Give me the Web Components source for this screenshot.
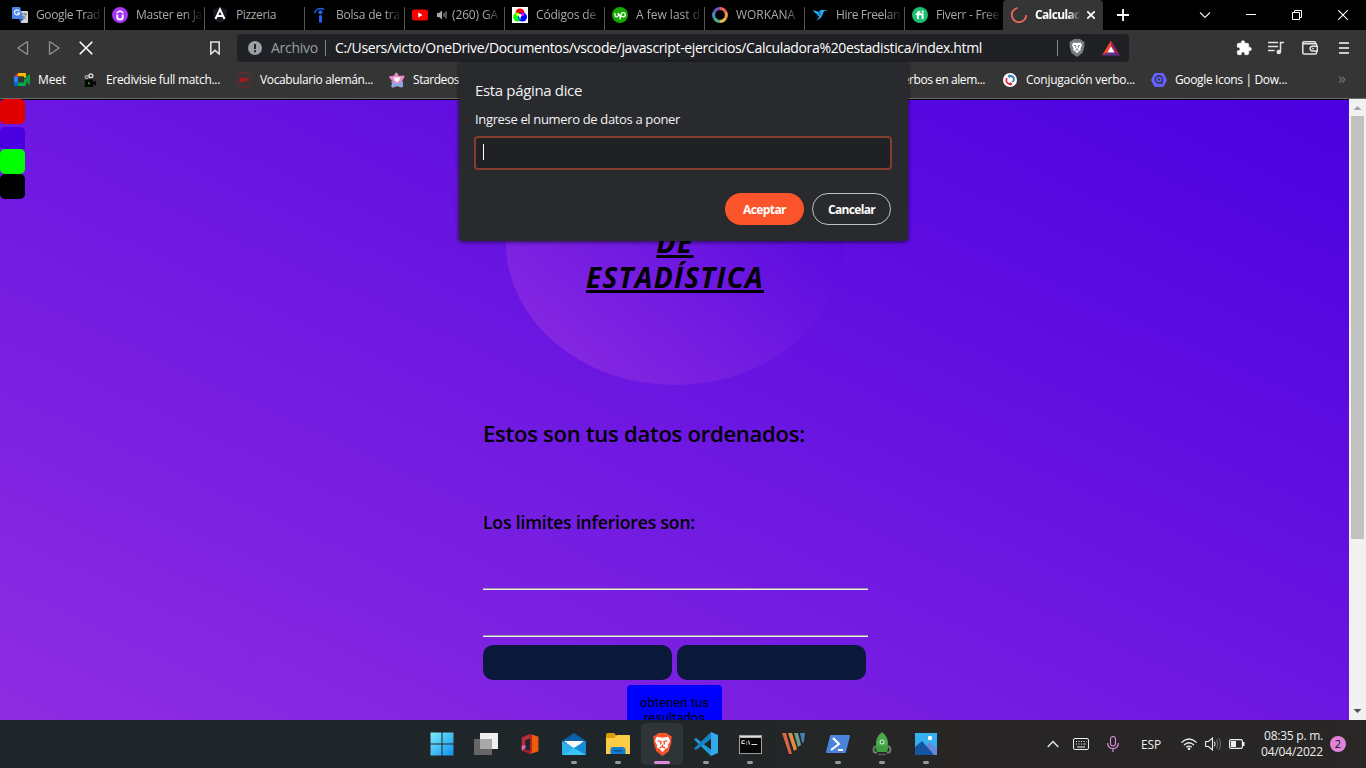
<!DOCTYPE html>
<html lang="es"><head><meta charset="utf-8"><title>Calculadora</title>
<style>html,body{margin:0;width:1366px;height:768px;overflow:hidden;background:#000;font-family:"Open Sans","Noto Sans",sans-serif}</style></head>
<body><desktop-screen></desktop-screen>
<script>
const svg=(vb,b)=>`<svg viewBox="${vb}" fill="none">${b}</svg>`;
const ICONS={
translate:svg('0 0 16 16','<path d="M6 4h9q1 0 1 1v10q0 1-1 1H9z" fill="#d5d5d5"/><path d="M1 0h7l3.500 12H1q-1 0-1-1V1q0-1 1-1z" fill="#4a83ec"/><path d="M8 16l3.500-4H7.500z" fill="#3059b8"/><path d="M7.300 4.300A2.500 2.500 0 1 0 7.500 6H5" stroke="#fff" stroke-width="1.100"/><path d="M10 7h5M12.500 6v1M14 7q-.5 3-3 5M11 8.500q1 2.500 3 3.500" stroke="#666" stroke-width=".8"/>'),
udemy:svg('0 0 16 16','<circle cx="8" cy="8" r="8" fill="#a435f0"/><path d="M5.300 7.500v2.700q0 2.300 2.700 2.300t2.700-2.300V7.500" stroke="#fff" stroke-width="1.800"/><path d="M4.600 5.800L8 3.900l3.400 1.900" stroke="#fff" stroke-width="1.500"/>'),
angular:svg('0 0 16 16','<path d="M8 0l7 2.500-1 9.500-6 4-6-4-1-9.500z" fill="#171b21"/><path d="M3.500 12L8 2.300 12.500 12M5.500 9h5" stroke="#fff" stroke-width="1.900"/>'),
indeed:svg('0 0 16 16','<path d="M2.500 6Q5-.5 12 2.300" stroke="#2164f3" stroke-width="1.500"/><circle cx="8.500" cy="5.300" r="2" fill="#2164f3"/><path d="M8.500 8.300V15.500" stroke="#2164f3" stroke-width="3"/>'),
youtube:svg('0 0 16 16','<rect y="2.500" width="16" height="11" rx="2.500" fill="#f00"/><path d="M6.300 5.500v5l4.300-2.500z" fill="#fff"/>'),
sound:svg('0 0 12 12','<path d="M1 4h2l3-2.500v9L3 8H1z" fill="#aaa"/><path d="M8 4v4M10 2.500v7" stroke="#aaa"/>'),
colors:svg('0 0 16 16','<path fill="#fff" d="M0 0h16v16H0z"/><circle cx="8" cy="6" r="4.500" fill="red"/><circle cx="5.700" cy="10" r="4.500" fill="#0f0"/><circle cx="10.500" cy="10" r="4.500" fill="#00f"/><path d="M3.500 6.500Q5 5 8 8l-3 1z" fill="#ff0"/><path d="M12.500 6.500Q10 5 8 8l4 1z" fill="#f0f"/><path d="M8 8.500q2 2 0 5-2-3 0-5z" fill="#0df"/><circle cx="8" cy="8.500" r="1.700" fill="#fff"/>'),
upwork:svg('0 0 16 16','<circle cx="8" cy="8" r="8" fill="#14a800"/><path d="M3 6v2.200q0 1.700 1.600 1.700t1.700-1.700V6q.8 3 2.700 3.800M7.800 12.500L9 7.500q.6-1.800 2.200-1.800a2 2 0 0 1 0 4.100Q9.500 9.800 8 7.500" stroke="#fff" stroke-width="1.300"/>'),
workana:svg('0 0 16 16','<g stroke-width="3"><path d="M8 1.600A6.400 6.400 0 0 1 13.500 4.800" stroke="#eb5f57"/><path d="M13.500 4.800A6.400 6.400 0 0 1 13.500 11.200" stroke="#f09745"/><path d="M13.500 11.200A6.400 6.400 0 0 1 8 14.400" stroke="#dabd51"/><path d="M8 14.400A6.400 6.400 0 0 1 2.500 11.200" stroke="#54a885"/><path d="M2.500 11.200A6.400 6.400 0 0 1 2.500 4.800" stroke="#468bc2"/><path d="M2.500 4.800A6.400 6.400 0 0 1 8 1.600" stroke="#7650b5"/></g>'),
freelancer:svg('0 0 16 16','<path d="M1 3l6 2 1.500-2H16l-4 1-2.500 6L4.500 14 7.500 9 4 8l2-.6L2.500 5.600z" fill="#29b2fe"/><path d="M8.500 3l1 7L6 6z" fill="#0e7fc0"/>'),
fiverr:svg('0 0 16 16','<circle cx="8" cy="8" r="8" fill="#1dbf73"/><path d="M3.800 7.300h6.800V12M5.900 12V6.200Q5.900 4.500 8.300 4.600" stroke="#fff" stroke-width="1.900"/><circle cx="10.700" cy="4.700" r="1.100" fill="#fff"/>'),
spinner:svg('0 0 16 16','<path d="M6.500.9A7.200 7.200 0 1 0 15.200 8" stroke="#e8695b" stroke-width="1.800"/>'),
closeb:svg('0 0 10 10','<path d="M1.300 1.300l7.400 7.400M8.700 1.300L1.300 8.700" stroke="#fff" stroke-width="1.700"/>'),
plus:svg('0 0 12 12','<path d="M6 0v12M0 6h12" stroke="#fff" stroke-width="1.800"/>'),
chev:svg('0 0 12 12','<path d="M1 3.500l5 5 5-5" stroke="#eee" stroke-width="1.100"/>'),
min:svg('0 0 10 10','<path d="M0 4.500h10" stroke="#fff"/>'),
restore:svg('0 0 10 10','<path d="M.5 2.500h7v7h-7zM2.500 2.500v-2h7v7h-2" stroke="#fff"/>'),
close:svg('0 0 10 10','<path d="M.3.3l9.400 9.400M9.700.3L.3 9.700" stroke="#fff" stroke-width="1.100"/>'),
back:svg('0 0 14 14','<path d="M11.500 1v12Q11 13.500 10.500 13L2 7l8.500-6q.6-.4 1 0z" stroke="#929292" stroke-width="1.300"/>'),
fwd:svg('0 0 14 14','<path d="M2.500 1v12q.5.500 1 0L12 7 3.500 1q-.6-.4-1 0z" stroke="#929292" stroke-width="1.300"/>'),
stop:svg('0 0 14 14','<path d="M.7.700l12.600 12.600M13.300.700L.700 13.300" stroke="#fff" stroke-width="1.600"/>'),
mark:svg('0 0 12 14','<path d="M1.800 1h8.400v12L6 9.300 1.800 13z" stroke="#ddd" stroke-width="1.600"/>'),
info:svg('0 0 14 14','<circle cx="7" cy="7" r="7" fill="#9aa0a6"/><path d="M7 3v5M7 9.300v2" stroke="#202124" stroke-width="1.900"/>'),
lion:svg('0 0 16 18','<path d="M3 1.500L5 0h6l2 1.500L15.500 3l-.3 2 .3 2-2 7L8 18l-5.500-4-2-7L.8 5 .5 3z" fill="#777c80"/><path d="M4.500 3.500l3.500.6 3.500-.6L13 6l-1.600 3.700.4 1.300-2.200 1.400L8 14.200l-1.600-1.800L4.200 11l.4-1.300L3 6z" fill="#fff"/><path d="M4.800 6.300l2.200.5-.5 2M11.200 6.300L9 6.800l.5 2M6.300 11.300L8 10.600l1.700.7M8 9v2" stroke="#777c80" stroke-width=".9"/>'),
bat:svg('0 0 18 16','<path d="M9 .5L0 15.500l5.500-3L9 6.500z" fill="#ff4724"/><path d="M9 .5l9 15-5.500-3L9 6.500z" fill="#9e1f63"/><path d="M0 15.500h18l-5.500-3h-7z" fill="#662d91"/><path d="M9 6.300l3.700 6.200H5.300z" fill="#fff"/>'),
puzzle:svg('0 0 24 24','<path d="M20.500 11H19V7a2 2 0 0 0-2-2h-4V3.500a2.500 2.500 0 0 0-5 0V5H4a2 2 0 0 0-2 2v3.800h1.500a2.700 2.700 0 0 1 0 5.400H2V20a2 2 0 0 0 2 2h3.800v-1.500a2.700 2.700 0 0 1 5.400 0V22H17a2 2 0 0 0 2-2v-4h1.500a2.500 2.500 0 0 0 0-5z" fill="#fff" stroke="#fff"/>'),
music:svg('0 0 16 14','<path d="M0 1.500h10M0 5.500h10M0 9.500h6.500M12.500 11V1.500H16" stroke="#e4e4e4" stroke-width="1.500"/><circle cx="10.800" cy="11" r="2.300" fill="#e4e4e4"/>'),
wallet:svg('0 0 16 14','<path d="M14.500 5V3.500Q14.500 2.800 13.500 2.800H2Q.8 2.500.8 1.500M14.500 10v2q0 1-1 1H2q-1.200 0-1.200-1V2Q.8.800 2 .8h10.500q1 0 1 1v1" stroke="#e4e4e4" stroke-width="1.500"/><path d="M15.300 5.200H10.500a2.400 2.400 0 0 0 0 4.800h4.800z" stroke="#e4e4e4" stroke-width="1.400"/><circle cx="11" cy="7.600" r=".9" fill="#e4e4e4"/>'),
menu:svg('0 0 10 12','<path d="M0 1h10M0 6h10M0 11h10" stroke="#fff" stroke-width="1.700"/>'),
meet:svg('0 0 16 13','<path d="M4 0h7q1 0 1 1v3l-2 1V3.300H4z" fill="#ffba00"/><path d="M4 0v3.500H0z" fill="#ea4335"/><path d="M0 3.500h4v6H0z" fill="#2684fc"/><path d="M0 9.500h4V13H1q-1 0-1-1z" fill="#0066da"/><path d="M4 9.600h6V7l2-1v6q0 1-1 1H4z" fill="#00ac47"/><path d="M12 4l3-2.600q1-.5 1 .5v9q0 1-1 .5L10 7z" fill="#0a9843"/>'),
camera:svg('0 0 16 16','<path d="M3 8h9v3l3-2v6l-3-2v3H3z" fill="#060606"/><circle cx="5" cy="5.500" r="1.600" stroke="#aaa" stroke-width="1.300"/><circle cx="9.500" cy="4" r="2" stroke="#ddd" stroke-width="1.500"/><path d="M6.500 10.500v3l2.300-1.500z" fill="#35b229"/>'),
ja:svg('0 0 16 16','<circle cx="8" cy="8" r="7.400" stroke="#872326" stroke-width=".9"/><path d="M4 6h1.500v3.500H3.500M7 10V6.500h2V10M7 8h2M11.500 6v2.500M11.500 9.300v.8" stroke="#e80b11"/>'),
star:svg('0 0 16 16','<path d="M6 1.500q1-2 2.500 0L10 4l4-.5q2.500.3 1 2.500l-2 3 1 4q0 2-2 1.500L8 14l-4 1.500q-2 0-1.300-2L3.500 9 .5 6q-1-2 1.500-2l3-.3z" fill="#e98ac6"/><path d="M1.500 9l3 1L8 12l3.500-2 3-1-1 2 .8 2.500q0 2-2.300 2L8 14l-4 1.500q-2 0-1.500-2L3 11z" fill="#8aa7df"/><path d="M4.500 5.500q2-1.500 3.500 0 1.500-1.500 3.500 0 .5 2.500-3.500 5-4-2.500-3.500-5z" fill="#f7d9ee"/><path d="M6 6.500q1-1 2 0 1-1 2 0 0 1.500-2 3-2-1.500-2-3z" fill="#fff"/>'),
conj:svg('0 0 14 14','<circle cx="7" cy="7" r="7" fill="#fff"/><path d="M6 3h2q3 .5 3 4l-1.500 2" stroke="#3781b5" stroke-width="1.800"/><path d="M4 5Q1.800 9 6 11h3" stroke="#dd3346" stroke-width="1.800"/><path d="M7 1v4.500L4.500 3.200z" fill="#3781b5"/><path d="M7 8.500V13l2.500-2z" fill="#dd3346"/>'),
hex:svg('0 0 16 16','<path d="M4.500 1h7q1 0 1.500 1l3 6-3 6q-.5 1-1.500 1h-7q-1 0-1.500-1L0 8l3-6q.5-1 1.500-1z" fill="#6563ff"/><circle cx="8" cy="7.500" r="3.600" stroke="#353555" stroke-width="1.600"/><circle cx="8" cy="7.500" r="1.200" fill="#353555"/><path d="M10 10l1.500 2" stroke="#353555" stroke-width="1.500"/>'),
windows:svg('0 0 24 24','<defs><linearGradient id="w" gradientUnits="userSpaceOnUse" x1="0" y1="0" x2="24" y2="24"><stop stop-color="#7df0f8"/><stop offset="1" stop-color="#0d8df0"/></linearGradient></defs><path d="M.5.500h11v11H.500zM12.500.500h11v11h-11zM.5 12.500h11v11H.500zM12.500 12.500h11v11h-11z" fill="url(#w)"/>'),
tasks:svg('0 0 24 24','<path d="M6 1h18v16H6z" fill="#f0f0f0"/><path d="M0 7h18v16H0z" fill="#666"/><path d="M6 7h12v10H6z" fill="#a9a9a9"/>'),
office:svg('0 0 24 24','<path d="M12 1L3 5v13l4-2V8l5-2z" fill="#b92b38"/><path d="M12 1l9 3v16l-9 3z" fill="#e64a19"/><path d="M7 8l5-2v13H7z" fill="#202629"/><path d="M12 1l3 .8V19l-3 4-9-4 1-1 8 1z" fill="#ad1f2b"/><path d="M14 2l7 2v16l-7 2z" fill="#ef5b0c"/><path d="M3 14l4-1v4l-4 2z" fill="#d46bb5"/>'),
mail:svg('0 0 24 24','<path d="M0 9L12 1l12 8v4H0z" fill="#0b60aa"/><path d="M2 9h20L12 17z" fill="#f6f7f7"/><path d="M0 9l12 7 12-7v14H0z" fill="#31b0ee"/><path d="M0 23L24 9v14z" fill="#168bd8"/><path d="M0 23l12-7 12 7z" fill="#38c4f4"/>'),
folder:svg('0 0 24 24','<path d="M0 3q0-2 2-2h6l3 3h12v6H0z" fill="#dc9b09"/><path d="M0 6h8l3-3h12q1 0 1 1v18H0z" fill="#fbcc46"/><path d="M4.500 22v-4q0-3 3-3h9q3 0 3 3v4z" fill="#137bd2"/><path d="M8 18h8v1.500H8z" fill="#095391"/>'),
brave:svg('0 0 22 24','<path d="M4 2l3-2h8l3 2 3 2-1 3 .5 2-3 10-6.500 5-6.500-5L1.500 9 2 7 1 4z" fill="#fb542b"/><path d="M5 4l6 1 6-1 2 4-2.500 5 .5 2-3.500 2L11 20l-2.500-3L5 15l.5-2L3 8z" fill="#fff"/><path d="M6 8.200l3.500.6-.7 3.200M16 8.200l-3.500.6.7 3.200M8 15.500l3-1.300 3 1.300M11 12v3" stroke="#f04a23" stroke-width="1.400"/>'),
vscode:svg('0 0 24 24','<path d="M0 7.500l2-1.500 16 12.500-1 5.500z" fill="#209cdb"/><path d="M0 16.500L17 0v7L2 18z" fill="#1683c9"/><path d="M17 0l7 3v18l-7 3z" fill="#34a9ed"/>'),
cmd:svg('0 0 24 22','<rect x=".5" y="1.500" width="23" height="19" fill="#070707" stroke="#a5a5a5"/><path d="M1 2h22v2H1z" fill="#ddd"/><path d="M6 7H4q-1 0-1 1v2h3M8 8v1M8 10v1M10 7l1 4M13 11h6" stroke="#ddd" stroke-width="1.100"/>'),
stripes:svg('0 0 24 24','<path d="M0 1h4l6 21H7z" fill="#db624b"/><path d="M6 1h4l5 16-3 2z" fill="#e28c43"/><path d="M12 1h4l3 12-3 2z" fill="#6d9f8c"/><path d="M18 1h5l-1 9-2 1z" fill="#477eae"/>'),
power:svg('0 0 24 20','<path d="M5 1h18q1 0 1 1l-4 16q0 1-1 1H1q-1 0-1-1L4 2q0-1 1-1z" fill="#4a83dc"/><path d="M7 4l6 6-8 6M12 16h5" stroke="#fff" stroke-width="2.100"/>'),
robo:svg('0 0 24 24','<path d="M6.500 14q-4 1-2.500 6l3 1M17.500 14q4 1 2.500 6l-3 1" stroke="#66806a" stroke-width="2"/><path d="M12 0q6 5 6 11 0 5-2 8H8q-2-3-2-8 0-6 6-11z" fill="#4aab4d"/><path d="M5 14h14l-2 6H7z" fill="#3d9b42"/><circle cx="12" cy="10" r="2.500" fill="#bce3c0"/><circle cx="12" cy="10" r="1.200" fill="#347f3b"/><path d="M8 22.500h8" stroke="#585c59" stroke-width="1.300"/>'),
photos:svg('0 0 22 22','<path d="M0 0h22v22H0z" fill="#35aff0"/><path d="M10 14l5-5 7 7v6H10z" fill="#6887d8"/><path d="M0 14l7-6 12 14H0z" fill="#1454a0"/><circle cx="15" cy="5" r="2.200" fill="#fff"/>'),
up:svg('0 0 12 8','<path d="M.700 7L6 1.500 11.300 7" stroke="#eee" stroke-width="1.300"/>'),
keyb:svg('0 0 16 12','<rect x=".5" y=".5" width="15" height="11" rx="1.500" stroke="#eee"/><path d="M3 3.500h1M5.500 3.500h1M8 3.500h1M10.500 3.500h1M13 3.500h.5M3 6h1M5.500 6h1M8 6h1M10.500 6h2M4 9h8" stroke="#eee" stroke-width="1.200"/>'),
mic:svg('0 0 12 16','<rect x="3.500" y=".5" width="5" height="9.500" rx="2.500" stroke="#dc90da" stroke-width="1.100"/><path d="M.6 7q.3 5.500 5.400 5.500T11.400 7M6 12.500V16" stroke="#dc90da" stroke-width="1.200"/>'),
wifi:svg('0 0 16 12','<path d="M.5 4.500q7.500-7 15 0M3 7q5-4.600 10 0M5.300 9.200q2.700-2.300 5.400 0" stroke="#eee" stroke-width="1.300"/><circle cx="8" cy="10.800" r="1.300" fill="#eee"/>'),
vol:svg('0 0 16 14','<path d="M.6 4.500h2.900L7.500 1v12L3.500 9.500H.600z" stroke="#eee" stroke-width="1.100"/><path d="M9.300 4.500q1.700 2.500 0 5" stroke="#eee"/><path d="M11.500 2.800q2.800 4.200 0 8.400M13.600 1q4 6 0 12" stroke="#777"/>'),
batt:svg('0 0 16 10','<rect x=".6" y=".6" width="12.800" height="8.800" rx="1.500" stroke="#eee" stroke-width="1.200"/><path d="M2 2h5v6H2zM14 3h1.500v4H14z" fill="#eee"/>')
};
const def=(n,css,html,after)=>customElements.define(n,class extends HTMLElement{
 connectedCallback(){ if(this.shadowRoot)return; const r=this.attachShadow({mode:'open'});
  r.innerHTML=`<style>${css}</style>`+(typeof html==='function'?html(this):html); if(after)after(this,r);}});
// Icon taken from the set above; w and h are its box in pixels
def('ui-icon',':host{display:block;flex:none}svg{display:block;width:100%;height:100%}',e=>ICONS[e.getAttribute('name')],e=>{e.style.width=e.getAttribute('w')+'px';e.style.height=(e.getAttribute('h')||e.getAttribute('w'))+'px'});
// One line of text tracked out or in to a given width
def('fit-text',':host{display:block;flex:none;white-space:pre}span{display:inline-block}:host([underline]) span{text-decoration:underline 3px;text-underline-offset:2px;text-decoration-skip-ink:none}',e=>`<span>${e.getAttribute('text')}</span>`,(e,r)=>{const s=r.querySelector('span'),w=+e.getAttribute('w');e.style.width=w+'px';const n=s.getBoundingClientRect().width;s.style.letterSpacing=((w-n)/e.getAttribute('text').length)+'px'});
def('browser-tab',`:host{display:flex;box-sizing:border-box;width:100px;height:30px;padding-left:8px;align-items:center;gap:8px;font-size:12px;line-height:30px;color:#a9a9a9;flex:none;background:linear-gradient(#555,#555) left 0 top 7px/1px 23px no-repeat}
:host([first]){background:none}:host([last]){width:99px}:host([active]){background:#353535;border-radius:4px 4px 0 0;color:#fff;font-weight:700}
.t{overflow:hidden;flex:1;display:flex;gap:4px;align-items:center;-webkit-mask:linear-gradient(90deg,#000 72%,transparent 98%)}:host([active]) .t{flex:none;width:46px}:host([full]) .t{-webkit-mask:none}`,
 e=>`<ui-icon name="${e.getAttribute('icon')}" w="16"></ui-icon><div class="t">${e.hasAttribute('audio')?'<ui-icon name="sound" w="12"></ui-icon>':''}<fit-text w="${e.getAttribute('w')}" text="${e.getAttribute('text')}"></fit-text></div><slot></slot>`);
const tabs=[['translate','Google Trad',64,'first'],['udemy','Master en Ja',66],['angular','Pizzeria',40,'full'],['indeed','Bolsa de tra',64],['youtube','(260) GA',46,'audio'],['colors','Códigos de',60],['upwork','A few last d',64],['workana','WORKANA',59],['freelancer','Hire Freelan',64],['fiverr','Fiverr - Free',63,'last']];
def('tab-strip',`:host{display:flex;height:30px;background:#000;padding-left:4px;align-items:center}`,
 tabs.map(t=>`<browser-tab icon="${t[0]}" text="${t[1]}" w="${t[2]}" ${t[3]||''}></browser-tab>`).join('')+
 `<browser-tab active icon="spinner" text="Calculad" w="46"><ui-icon name="closeb" w="10" style="margin-left:-3px"></ui-icon></browser-tab>
 <ui-icon name="plus" w="12" style="margin-left:14px"></ui-icon><ui-icon name="chev" w="12" style="margin-left:70px"></ui-icon><ui-icon name="min" w="10" style="margin-left:35px"></ui-icon><ui-icon name="restore" w="10" style="margin-left:36px"></ui-icon><ui-icon name="close" w="10" style="margin-left:36px"></ui-icon>`);
def('nav-bar',`:host{display:flex;height:36px;align-items:center;background:#353535;padding-left:16px}
.o{display:flex;align-items:center;box-sizing:border-box;width:892px;height:28px;background:#202124;border-radius:4px;padding-left:11px;margin:0 109px 0 16px;font-size:14px;line-height:26px;color:#fff}.g{color:#9aa0a6;margin:0 7px 0 9px}i{width:1px;height:16px;background:#80868b}`,
`<ui-icon name="back" w="14"></ui-icon><ui-icon name="fwd" w="14" style="margin-left:17px"></ui-icon><ui-icon name="stop" w="14" style="margin-left:18px"></ui-icon><ui-icon name="mark" w="12" h="14" style="margin-left:116px"></ui-icon>
<div class="o"><ui-icon name="info" w="14"></ui-icon><fit-text class="g" w="47" text="Archivo"></fit-text><i></i><fit-text style="margin-left:9px" w="647" text="C:/Users/victo/OneDrive/Documentos/vscode/javascript-ejercicios/Calculadora%20estadistica/index.html"></fit-text><i style="margin-left:75px"></i><ui-icon name="lion" w="16" h="18" style="margin-left:11px"></ui-icon><ui-icon name="bat" w="18" h="16" style="margin-left:17px"></ui-icon></div>
<ui-icon name="puzzle" w="16" style="margin-left:-2px"></ui-icon><ui-icon name="music" w="16" h="14" style="margin-left:16px"></ui-icon><ui-icon name="wallet" w="16" h="14" style="margin-left:18px"></ui-icon><ui-icon name="menu" w="10" h="12" style="margin-left:21px"></ui-icon>`);
const marks=[['meet',16,'Meet',28,14,8],['camera',15,'Eredivisie full match...',114,16,9],['ja',16,'Vocabulario alemán...',113,16,8],['star',16,'Stardeos',46,16,8],[0,0,'Verbos en alem...',89,437,0],['conj',14,'Conjugación verbo...',109,18,9],['hex',16,'Google Icons | Dow...',112,16,8]];
def('bookmark-bar',`:host{display:flex;height:32px;box-sizing:border-box;padding-bottom:5px;align-items:center;background:#353535;color:#fff;font-size:12px}b{font-weight:400;color:#777;font-size:16px;margin:-3px 0 0 51px;line-height:20px}`,
 marks.map(m=>(m[0]?`<ui-icon name="${m[0]}" w="${m[1]}" ${m[0]=='meet'?'h="13"':''} style="margin-left:${m[4]}px"></ui-icon>`:'')+`<fit-text w="${m[3]}" text="${m[2]}" style="margin-left:${m[0]?m[5]:m[4]}px"></fit-text>`).join('')+'<b>»</b>');
def('color-swatches',`:host{display:flex;flex-direction:column;width:25px;margin-top:-1px;flex:none}i{width:25px;height:25px;border-radius:5px}`,
`<i style="background:#e00000"></i><i style="background:#4a00e0;height:22px;margin-top:3px;border-radius:5px 5px 0 0"></i><i style="background:#0f0"></i><i style="background:#000"></i>`);
def('stat-page',`:host{display:flex;box-sizing:border-box;width:1349px;height:621px;padding-top:1px;overflow:hidden;background:linear-gradient(#000,#000) top/100% 1px no-repeat,linear-gradient(to top right,#8e2de2,#4a00e0);color:#000;font-weight:600}
main{width:385px;margin-left:458px;display:flex;flex-direction:column}main>*{flex:none}
.hero{box-sizing:border-box;width:338px;height:285px;margin-left:23px;border-radius:50%;background:linear-gradient(to top right,#8e2de2,#4a00e0);padding-top:125px;display:flex;flex-direction:column;align-items:center;font-size:28px;line-height:35px;font-style:italic;font-weight:700}
.a{font-size:22px;line-height:30px;margin-top:33px}.b{font-size:17.500px;line-height:24px;margin-top:62px}
hr{box-sizing:border-box;width:385px;height:2px;border:0;border-top:1px solid #9a9a9a;background:#eee;margin:0}
.r{display:flex;gap:5px;margin-top:8px}.r button{width:189px;height:35px;border:0;border-radius:10px;background:#0a1839;padding:0}
.go{width:95px;height:50px;box-sizing:border-box;background:#00f;border-radius:4px;margin:5px 0 0 144px;padding-top:10px;display:flex;flex-direction:column;align-items:center;font:400 13px/15px Roboto,sans-serif}`,
`<color-swatches></color-swatches><main><div class="hero"><fit-text underline w="37" text="DE"></fit-text><fit-text underline w="178" text="ESTADÍSTICA"></fit-text></div>
<fit-text class="a" w="322" text="Estos son tus datos ordenados:"></fit-text><fit-text class="b" w="212" text="Los limites inferiores son:"></fit-text>
<hr style="margin-top:54px"><hr style="margin-top:45px"><div class="r"><button aria-label="1"></button><button aria-label="2"></button></div><div class="go"><fit-text w="69" text="obtenen tus"></fit-text><fit-text w="61" text="resultados"></fit-text></div></main>`);
def('scroll-bar',`:host{display:flex;flex-direction:column;justify-content:space-between;align-items:center;width:17px;height:621px;background:#f1f1f1}svg{width:17px;height:17px;flex:none}i{width:13px;height:423px;background:#c1c1c1}s{flex:1}`,
`<svg><path d="M4.500 11h8L8.500 7z" fill="#a3a3a3"/></svg><i></i><s></s><svg><path d="M4.500 6h8L8.500 10z" fill="#505050"/></svg>`);
def('prompt-dialog',`:host{display:flex;flex-direction:column;box-sizing:border-box;width:449px;height:179px;background:#292a2d;border-radius:4px;box-shadow:0 1px 4px rgba(0,0,0,.65);padding:18px 16px 0 15px;color:#f1f2f4}
.h{font-size:15px;line-height:20px;margin-left:1px}.m{font-size:13px;line-height:18px;margin:10px 0 8px 1px}.in{display:flex;align-items:center;box-sizing:border-box;height:34px;border:2px solid #843e31;border-radius:4px;background:#202124;padding-left:7px}.in i{width:1px;height:16px;background:#fff;margin-top:-2px}
.f{display:flex;justify-content:flex-end;gap:8px;margin:23px 1px 0 0}.f div{display:flex;align-items:center;justify-content:center;box-sizing:border-box;width:79px;height:32px;border-radius:16px;font-size:12px;font-weight:700;color:#fff;background:#fb542b}.f .c{background:none;border:1px solid #bdc1c6}`,
`<fit-text class="h" w="107" text="Esta página dice"></fit-text><fit-text class="m" w="205" text="Ingrese el numero de datos a poner"></fit-text><div class="in"><i></i></div><div class="f"><div><fit-text w="43" text="Aceptar"></fit-text></div><div class="c"><fit-text w="47" text="Cancelar"></fit-text></div></div>`);
const apps=[['windows',24],['tasks',24],['office',22],['mail',24,1],['folder',24,1],['brave',21,2,23],['vscode',24,1],['cmd',23,1,21],['stripes',24],['power',24,1,20],['robo',24,1],['photos',22,1]];
def('task-bar',`:host{display:flex;height:48px;background:linear-gradient(90deg,#202629,#1f2629 45%,#272625 68%,#292626);color:#eee;align-items:center}
.a{display:flex;margin-left:422px;height:48px}.p{width:40px;height:40px;margin:4px 4px 0 0;display:flex;align-items:center;justify-content:center;border-radius:4px;position:relative}.on{background:#2f3436;box-shadow:0 0 0 .5px #404548}
.p i{position:absolute;bottom:0;left:17px;width:6px;height:3px;border-radius:2px;background:#969a9b}.on i{left:12px;width:16px;background:#e08ade}
.d{width:62px;font-size:12px;line-height:16px;margin-left:16px}.d fit-text:first-child{margin-left:3px}.n{width:16px;height:16px;border-radius:8px;background:#e083d9;color:#111;font-size:11px;line-height:16px;text-align:center;margin-left:7px}`,
`<div class="a">${apps.map(a=>`<div class="p ${a[2]==2?'on':''}"><ui-icon name="${a[0]}" w="${a[1]}" h="${a[3]||a[1]}"></ui-icon>${a[2]?'<i></i>':''}</div>`).join('')}</div>
<ui-icon name="up" w="12" h="8" style="margin-left:97px"></ui-icon><ui-icon name="keyb" w="16" h="12" style="margin-left:14px"></ui-icon><ui-icon name="mic" w="12" h="16" style="margin-left:18px"></ui-icon><fit-text style="font-size:12px;margin-left:22px" w="20" text="ESP"></fit-text><ui-icon name="wifi" w="16" h="12" style="margin-left:20px"></ui-icon><ui-icon name="vol" w="16" h="14" style="margin-left:8px"></ui-icon><ui-icon name="batt" w="16" h="10" style="margin-left:8px"></ui-icon>
<div class="d"><fit-text w="59" text="08:35 p. m."></fit-text><fit-text w="62" text="04/04/2022"></fit-text></div><div class="n">2</div>`);
def('desktop-screen',`:host{display:flex;flex-direction:column;width:1366px;height:768px;position:relative;overflow:hidden}.v{display:flex;height:621px}.l{height:1px;background:#6b6b6b;flex:none}prompt-dialog{position:absolute;left:459px;top:62px}`,
`<tab-strip></tab-strip><nav-bar></nav-bar><bookmark-bar></bookmark-bar><div class="l"></div><div class="v"><stat-page></stat-page><scroll-bar></scroll-bar></div><task-bar></task-bar><prompt-dialog></prompt-dialog>`);
</script></body></html>
